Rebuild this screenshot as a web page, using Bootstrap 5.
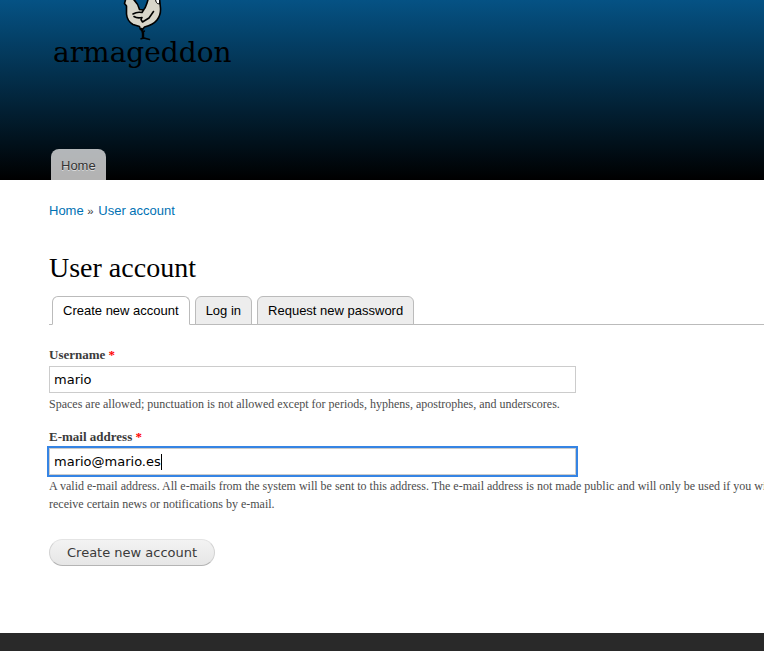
<!DOCTYPE html>
<html lang="en">
<head>
<meta charset="utf-8">
<meta name="viewport" content="width=device-width, initial-scale=1">
<title>User account | armageddon</title>
<link rel="stylesheet" href="https://cdn.jsdelivr.net/npm/bootstrap@5.3.0/dist/css/bootstrap.min.css">
<style>
  body { font-family: "Liberation Serif", Georgia, serif; font-size: 13px; line-height: 20px; color: #3b3b3b; background: #292929; }
  .site-head { background: linear-gradient(#055284, #000); min-height: 180px; padding-left: 49px; }
  .site-logo { width: 188px; height: 75px; }
  .sans { font-family: "Liberation Sans", Arial, sans-serif; }
  .main-nav .nav-link { margin-left: 2px; padding: 7px 10px 4px; border-radius: 8px 8px 0 0; background: rgba(255, 255, 255, .7); color: #333; text-shadow: 0 1px #ddd; }
  .page-main { padding: 21px 0 67px 49px; }
  .trail a { color: #0071b3; text-decoration: none; }
  .trail small { margin: 0 1px 0 0; }
  h1 { font-size: 28px; line-height: 34px; font-weight: 400; color: #000; margin: 30px 0 11px; }
  .account-tabs { gap: 5px; padding-left: 3px; border-bottom: 1px solid #bbb; }
  .account-tabs .nav-link { padding: 4px 10px 3px; border: 1px solid #bbb; border-radius: 6px 6px 0 0; background: #ededed; color: #000; margin-bottom: -1px; }
  .account-tabs .nav-link.active { background: #fff; border-color: #bbb #bbb #fff; color: #000; }
  .account-form { padding-top: 20px; }
  .account-form label { font-weight: 700; display: block; margin-bottom: 1px; }
  .account-form abbr { color: #f00; text-decoration: none; cursor: default; }
  .field { max-width: 527px; }
  .field .form-control { font: 13px/17px "DejaVu Sans", sans-serif; color: #000; padding: 4px; border: 1px solid #ccc; border-radius: 0; min-height: 0; }
  .field .form-control.is-current { outline: 2px solid #3584e4; box-shadow: none; }
  .caret { left: 112px; top: 6px; width: 1px; height: 16px; background: #000; }
  .hint { font-size: 12px; line-height: 18px; margin: 2px 0 14px; color: #4c4c4c; }
  .btn-create { font: 13px/17px "DejaVu Sans", sans-serif; color: #3a3a3a; padding: 4px 17px; border: 1px solid #e4e4e4; border-color: #e4e4e4 #d2d2d2 #b4b4b4; border-radius: 14px; background: linear-gradient(#f3f3f3, #e6e6e6); margin-top: 12px; }
</style>
</head>
<body>
<header class="site-head d-flex flex-column justify-content-between align-items-start">
  <a href="#" aria-label="armageddon">
    <svg class="site-logo d-block" viewBox="49 0 188 75" fill="none" stroke="#000" stroke-width="1.6" stroke-linejoin="round" stroke-linecap="round">
      <path fill="#d9d6ca" d="M126-2 124.500 3.500 126.500 6 126.500 14Q127 21 133 24.500L139.500 26.500 140.500 29.500 142 30 144.500 27Q153 25 157 20 161 15 160.500 8L159.500-2H148.500L147 3Q145.500 8 143.500 10L139.500 9.500Q138 3 132-2Z"/>
      <path fill="#fff" stroke-width="1" d="M155.500-1Q155.500 4 159.500 4V-1Z"/>
      <path d="M143.500 10 142 12.500Q137 11.500 133 14M134 16.500Q137 18.500 142 17.500L141 19.500 142.500 22 149 18 153.500 11.500"/>
      <path stroke-width="2.400" d="M141.800 29 143 33 143 37.500"/>
      <path stroke-width="1.400" d="M141 38.800 144 38 149.500 39.500M142.500 33 144.500 31"/>
      <text x="53" y="62" font-family="DejaVu Serif, serif" font-size="28" fill="#000" stroke="none">armageddon</text>
    </svg>
  </a>
  <nav class="nav main-nav sans" aria-label="Main"><a class="nav-link" href="#">Home</a></nav>
</header>
<main class="page-main bg-white overflow-hidden">
  <nav class="trail sans" aria-label="Breadcrumb"><a href="#">Home</a> <small>»</small> <a href="#">User account</a></nav>
  <h1>User account</h1>
  <nav class="nav account-tabs sans" aria-label="Account">
    <a class="nav-link active" aria-current="page" href="#">Create new account</a>
    <a class="nav-link" href="#">Log in</a>
    <a class="nav-link" href="#">Request new password</a>
  </nav>
  <form class="account-form">
    <label for="name">Username <abbr title="required">*</abbr></label>
    <div class="field"><input class="form-control" id="name" type="text" value="mario"></div>
    <p class="hint">Spaces are allowed; punctuation is not allowed except for periods, hyphens, apostrophes, and underscores.</p>
    <label for="mail">E-mail address <abbr title="required">*</abbr></label>
    <div class="field position-relative"><input class="form-control is-current" id="mail" type="text" value="mario@mario.es"><span class="caret position-absolute"></span></div>
    <p class="hint text-nowrap">A valid e-mail address. All e-mails from the system will be sent to this address. The e-mail address is not made public and will only be used if you wish<br>receive certain news or notifications by e-mail.</p>
    <button class="btn btn-create" type="button">Create new account</button>
  </form>
</main>
<script src="https://cdn.jsdelivr.net/npm/bootstrap@5.3.0/dist/js/bootstrap.bundle.min.js"></script>
</body>
</html>
